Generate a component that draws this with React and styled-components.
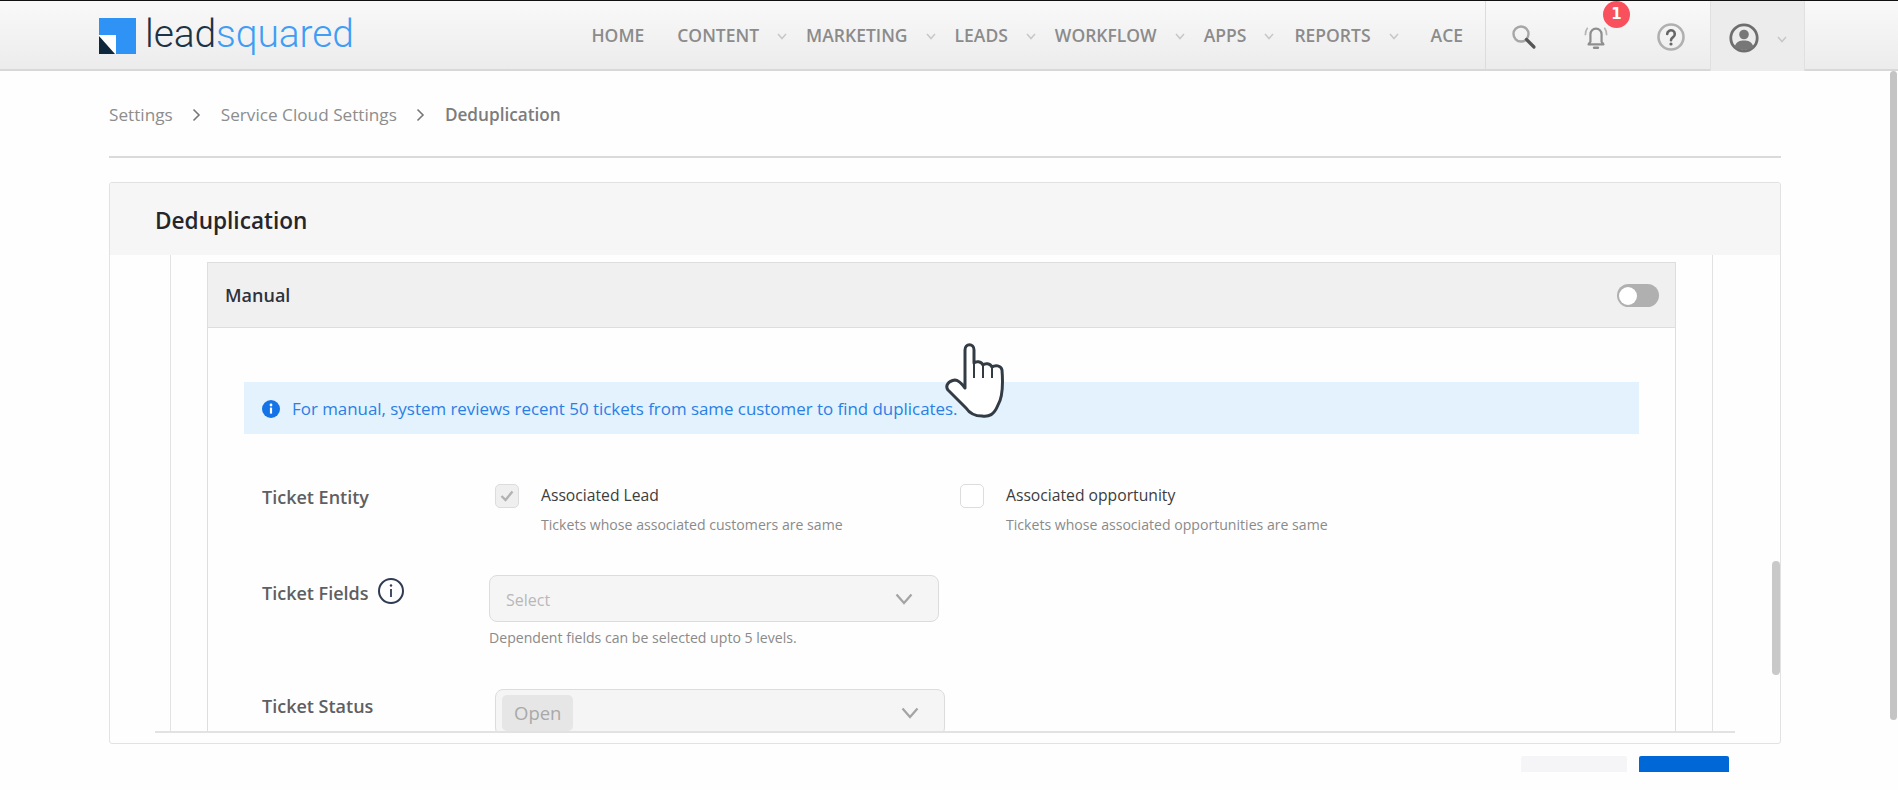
import React from "react";
import styled, { createGlobalStyle } from "styled-components";

const Global = createGlobalStyle`
  html, body { margin: 0; padding: 0; height: 790px; overflow: hidden; background: #fefefe; }
  body { font-family: "Open Sans", "Liberation Sans", sans-serif; }
  * { box-sizing: border-box; }
`;

const Page = styled.div`
  position: relative;
  width: 1898px;
  height: 790px;
  overflow: hidden;
`;

const Header = styled.header`
  display: flex;
  align-items: stretch;
  height: 71px;
  padding: 0 93px 0 99px;
  border-top: 1px solid #111;
  border-bottom: 2px solid #d8d8d8;
  background: linear-gradient(#f9f9fa, #ececec);
`;

const Logo = styled.div`
  display: flex;
  align-items: center;
  gap: 9px;
  padding-top: 2px;
`;

const LogoText = styled.span`
  font-family: "Roboto", sans-serif;
  font-size: 39px;
  font-weight: 300;
  letter-spacing: -0.1px;
  color: #1c3346;
  line-height: 1;
  margin-top: -3px;
`;

const LogoAccent = styled.span`
  color: #3f9df5;
`;

const Nav = styled.nav`
  display: flex;
  align-items: center;
  margin-left: auto;
`;

const NavItem = styled.a`
  display: flex;
  align-items: center;
  font-size: 17.5px;
  font-weight: 600;
  color: #8b8b8b;
  margin-right: ${(p) => p.$gap}px;
`;

const Caret = styled.svg`
  width: 10px;
  height: 7px;
  margin-left: ${(p) => p.$left}px;
  margin-top: 3px;
  fill: none;
  stroke: #c8c8c8;
  stroke-width: 1.6;
`;

const Tools = styled.div`
  display: flex;
  align-items: stretch;
  margin-left: 22px;
  border-left: 1px solid #dcdcdc;
`;

const ToolCell = styled.div`
  position: relative;
  display: flex;
  align-items: center;
  justify-content: center;
  width: ${(p) => p.$w}px;
  padding: 3px ${(p) => p.$right || 0}px 0 0;
`;

const UserCell = styled(ToolCell)`
  gap: 18px;
  background: #ececec;
  border-left: 1px solid #e0e0e0;
  border-right: 1px solid #e0e0e0;
  margin-bottom: -2px;
`;

const Badge = styled.span`
  position: absolute;
  top: 0;
  left: 41px;
  width: 27px;
  height: 27px;
  border-radius: 50%;
  background: #f8505c;
  color: #fff;
  font-family: "DejaVu Sans", sans-serif;
  font-weight: 700;
  font-size: 15px;
  line-height: 26px;
  text-align: center;
`;

const Main = styled.main`
  padding-left: 109px;
  width: 1781px;
`;

const Crumbs = styled.div`
  display: flex;
  align-items: center;
  height: 85px;
  padding-top: 2px;
  font-size: 17.2px;
  color: #8d8d8d;
`;

const CrumbSep = styled.svg`
  width: 9px;
  height: 14px;
  margin: 0 20px 0 19px;
  fill: none;
  stroke: #777;
  stroke-width: 1.6;
`;

const CrumbCurrent = styled.span`
  font-weight: 600;
  color: #7c7c7c;
`;

const Rule = styled.hr`
  margin: 0;
  border: 0;
  height: 2px;
  background: #dadada;
`;

const Card = styled.section`
  position: relative;
  margin-top: 24px;
  height: 562px;
  border: 1px solid #e2e2e2;
  border-radius: 3px;
  background: #fefefe;
  overflow: hidden;
`;

const CardHead = styled.div`
  display: flex;
  align-items: center;
  height: 72px;
  padding: 2px 0 0 45px;
  background: #f6f6f7;
  font-size: 22.6px;
  font-weight: 600;
  color: #25262b;
`;

const CardBody = styled.div`
  height: 476px;
  overflow: hidden;
  padding-left: 60px;
`;

const Column = styled.div`
  width: 1543px;
  height: 476px;
  padding: 7px 0 0 36px;
  border-left: 1px solid #e2e2e2;
  border-right: 1px solid #e2e2e2;
`;

const Box = styled.div`
  width: 1469px;
  border: 1px solid #dedede;
`;

const BoxHead = styled.div`
  display: flex;
  align-items: center;
  justify-content: space-between;
  height: 65px;
  padding: 0 16px 0 17px;
  background: #f0f0f1;
  border-bottom: 1px solid #dedede;
  font-size: 18px;
  font-weight: 600;
  color: #30323a;
`;

const Toggle = styled.span`
  position: relative;
  display: block;
  width: 42px;
  height: 23px;
  border-radius: 12px;
  background: #b0b0b0;
`;

const Knob = styled.span`
  position: absolute;
  left: 2px;
  top: 3px;
  width: 18px;
  height: 18px;
  border-radius: 50%;
  background: #fff;
`;

const BoxBody = styled.div`
  padding: 54px 0 60px 36px;
`;

const Banner = styled.div`
  display: flex;
  align-items: center;
  gap: 12px;
  width: 1395px;
  height: 52px;
  padding: 1px 0 0 18px;
  background: #e3f2fd;
  font-size: 16.9px;
  color: #2a7fe6;
`;

const Form = styled.div`
  padding: 50px 0 0 18px;
`;

const Row = styled.div`
  display: flex;
  align-items: flex-start;
  margin-bottom: ${(p) => p.$after}px;
`;

const Label = styled.div`
  display: flex;
  align-items: center;
  gap: 9px;
  flex: none;
  width: ${(p) => p.$w}px;
  margin-top: ${(p) => p.$top}px;
  line-height: 22px;
  font-size: 18px;
  font-weight: 600;
  color: #5f5f62;
`;

const Option = styled.div`
  display: flex;
  gap: 22px;
  width: 465px;
`;

const Check = styled.span`
  display: flex;
  align-items: center;
  justify-content: center;
  flex: none;
  width: 24px;
  height: 24px;
  border: 1px solid #dcdcdc;
  border-radius: 5px;
  background: ${(p) => (p.$on ? "#efefef" : "#fff")};
`;

const OptionTitle = styled.div`
  font-size: 15.7px;
  line-height: 22px;
  color: #3c3c3c;
`;

const Sub = styled.div`
  margin-top: ${(p) => p.$top}px;
  font-size: 14.1px;
  line-height: ${(p) => p.$lh}px;
  color: #8a8a8a;
`;

const Select = styled.div`
  display: flex;
  align-items: center;
  justify-content: space-between;
  width: 450px;
  height: 47px;
  padding: 0 25px 0 ${(p) => p.$pad}px;
  border: 1px solid #dcdcdc;
  border-radius: 8px;
  background: #f5f5f6;
  font-size: 16px;
  color: #b8b8b8;
`;

const SelectText = styled.span`
  padding-top: 2px;
`;

const Tag = styled.span`
  display: flex;
  align-items: center;
  height: 36px;
  padding: 0 12px;
  border-radius: 5px;
  background: #e6e6e6;
  font-size: 18.5px;
  color: #a9a9a9;
`;

const SelectCaret = styled.svg`
  width: 18px;
  height: 12px;
  fill: none;
  stroke: #a4a4a4;
  stroke-width: 2.2;
`;

const CardFoot = styled.div`
  height: 12px;
  margin: 0 45px;
  border-top: 2px solid #e2e2e2;
`;

const CardScroll = styled.span`
  position: absolute;
  right: 0;
  top: 378px;
  width: 8px;
  height: 114px;
  border-radius: 4px;
  background: #c9c9c9;
`;

const Actions = styled.div`
  display: flex;
  justify-content: flex-end;
  gap: 12px;
  margin-top: 12px;
  padding-right: 52px;
`;

const Button = styled.button`
  width: ${(p) => p.$w}px;
  height: 16px;
  padding: 0;
  border: 0;
  border-radius: 2px 2px 0 0;
  background: ${(p) => p.$bg};
`;

const PageScroll = styled.span`
  position: absolute;
  right: 1px;
  top: 71px;
  width: 7px;
  height: 649px;
  border-radius: 4px;
  background: #c4c4c4;
`;

const Hand = styled.svg`
  position: absolute;
  left: 945px;
  top: 343px;
  width: 60px;
  height: 76px;
`;

const caret = <path d="M1 1 L5 5.5 L9 1" />;
const bigCaret = <path d="M1.5 1.5 L9 10 L16.5 1.5" />;

const NAV = [
  ["HOME", false, 33],
  ["CONTENT", true, 19],
  ["MARKETING", true, 19],
  ["LEADS", true, 19],
  ["WORKFLOW", true, 19],
  ["APPS", true, 20],
  ["REPORTS", true, 32],
  ["ACE", false, 0],
];

export default function App() {
  return (
    <Page>
      <Global />
      <Header>
        <Logo>
          <svg width="37" height="36" viewBox="0 0 37 36">
            <rect width="37" height="36" fill="#2f93f5" />
            <path d="M0 17 H17 V36 H0 Z" fill="#fff" />
            <path d="M0 18 L16 36 H0 Z" fill="#10283c" />
          </svg>
          <LogoText>
            lead<LogoAccent>squared</LogoAccent>
          </LogoText>
        </Logo>
        <Nav>
          {NAV.map(([name, hasCaret, gap]) => (
            <NavItem key={name} $gap={gap}>
              {name}
              {hasCaret && <Caret $left={18} viewBox="0 0 10 7">{caret}</Caret>}
            </NavItem>
          ))}
        </Nav>
        <Tools>
          <ToolCell $w={76}>
            <svg width="26" height="26" viewBox="0 0 26 26" fill="none">
              <circle cx="10" cy="10" r="7.5" stroke="#a6a6a6" strokeWidth="2.4" />
              <path d="M15.5 15.5 L23 23" stroke="#555" strokeWidth="3.2" strokeLinecap="round" />
            </svg>
          </ToolCell>
          <ToolCell $w={72} $right={5}>
            <svg width="26" height="28" viewBox="0 0 28 30" fill="none" stroke="#8e8e8e">
              <path d="M8 20 V12 a6 6 0 0 1 12 0 V20 L22 23 H6 Z" strokeWidth="2.4" strokeLinejoin="round" />
              <path d="M12 26.5 h4" strokeWidth="2.8" strokeLinecap="round" />
              <path d="M5 5 Q2.5 8 2.5 13 M23 5 Q25.5 8 25.5 13" strokeWidth="1.8" stroke="#b4b4b4" />
            </svg>
            <Badge>1</Badge>
          </ToolCell>
          <ToolCell $w={76} $right={2}>
            <svg width="28" height="28" viewBox="0 0 28 28" fill="none">
              <circle cx="14" cy="14" r="12.5" stroke="#b0b0b0" strokeWidth="2.6" />
              <path d="M10.2 11 a3.8 3.8 0 1 1 5.9 3.2 c-1.5 1-2.1 1.6-2.1 3" stroke="#666" strokeWidth="2.6" strokeLinecap="round" />
              <circle cx="14" cy="21" r="1.6" fill="#666" />
            </svg>
          </ToolCell>
          <UserCell $w={95}>
            <svg width="30" height="30" viewBox="0 0 30 30" fill="none">
              <circle cx="15" cy="15" r="13.2" stroke="#6e6e6e" strokeWidth="2.8" />
              <circle cx="15" cy="11.5" r="4.8" fill="#777" />
              <path d="M5.5 24 C7 18.5 11 17.5 15 17.5 C19 17.5 23 18.5 24.5 24 C21 28 9 28 5.5 24 Z" fill="#777" />
            </svg>
            <Caret $left={0} viewBox="0 0 10 7">{caret}</Caret>
          </UserCell>
        </Tools>
      </Header>

      <Main>
        <Crumbs>
          <span>Settings</span>
          <CrumbSep viewBox="0 0 9 14"><path d="M1.5 1.5 L7 7 L1.5 12.5" /></CrumbSep>
          <span>Service Cloud Settings</span>
          <CrumbSep viewBox="0 0 9 14"><path d="M1.5 1.5 L7 7 L1.5 12.5" /></CrumbSep>
          <CrumbCurrent>Deduplication</CrumbCurrent>
        </Crumbs>
        <Rule />
        <Card>
          <CardHead>Deduplication</CardHead>
          <CardBody>
            <Column>
              <Box>
                <BoxHead>
                  Manual
                  <Toggle><Knob /></Toggle>
                </BoxHead>
                <BoxBody>
                  <Banner>
                    <svg width="18" height="18" viewBox="0 0 18 18">
                      <circle cx="9" cy="9" r="9" fill="#1473e6" />
                      <rect x="7.9" y="7.6" width="2.2" height="6" fill="#fff" />
                      <circle cx="9" cy="5" r="1.4" fill="#fff" />
                    </svg>
                    For manual, system reviews recent 50 tickets from same customer to find duplicates.
                  </Banner>
                  <Form>
                    <Row $after={41}>
                      <Label $w={233} $top={2}>Ticket Entity</Label>
                      <Option>
                        <Check $on>
                          <svg width="14" height="12" viewBox="0 0 14 12" fill="none">
                            <path d="M1.5 6 L5.5 10 L12.5 1.5" stroke="#b2b2b2" strokeWidth="2.4" />
                          </svg>
                        </Check>
                        <div>
                          <OptionTitle>Associated Lead</OptionTitle>
                          <Sub $top={10} $lh={18}>Tickets whose associated customers are same</Sub>
                        </div>
                      </Option>
                      <Option>
                        <Check />
                        <div>
                          <OptionTitle>Associated opportunity</OptionTitle>
                          <Sub $top={10} $lh={18}>Tickets whose associated opportunities are same</Sub>
                        </div>
                      </Option>
                    </Row>
                    <Row $after={41}>
                      <Label $w={227} $top={7}>
                        Ticket Fields
                        <svg width="26" height="26" viewBox="0 0 26 26" fill="none" style={{ marginTop: -4 }}>
                          <circle cx="13" cy="13" r="12" stroke="#2f3b52" strokeWidth="2" />
                          <path d="M13 11 V19" stroke="#2f3b52" strokeWidth="1.8" />
                          <circle cx="13" cy="7.5" r="1.2" fill="#2f3b52" />
                        </svg>
                      </Label>
                      <div>
                        <Select $pad={16}>
                          <SelectText>Select</SelectText>
                          <SelectCaret viewBox="0 0 18 12">{bigCaret}</SelectCaret>
                        </Select>
                        <Sub $top={6} $lh={20}>Dependent fields can be selected upto 5 levels.</Sub>
                      </div>
                    </Row>
                    <Row $after={0}>
                      <Label $w={233} $top={6}>Ticket Status</Label>
                      <Select $pad={6}>
                        <Tag>Open</Tag>
                        <SelectCaret viewBox="0 0 18 12">{bigCaret}</SelectCaret>
                      </Select>
                    </Row>
                  </Form>
                </BoxBody>
              </Box>
            </Column>
          </CardBody>
          <CardFoot />
          <CardScroll />
        </Card>
        <Actions>
          <Button $w={106} $bg="#f5f5f7" />
          <Button $w={90} $bg="#0068d6" />
        </Actions>
      </Main>

      <PageScroll />
      <Hand viewBox="0 0 60 76" fill="#fff" stroke="#333c45" strokeWidth="3" strokeLinejoin="round">
        <path d="M20 7 C20 0 29 0 29 7 V20 C31 18 36 18 38 22 C40 20 45 20 47 24 C50 22 56 22 57 27 C58 40 58 54 53 62 C49 72 44 74 37 73 C30 73 25 71 21 65 L3 47 C0 43 3 38 10 37 C13 37 17 41 20 45 Z" />
        <path d="M29 20 V35 M38 22 V35 M47 24 V35" strokeWidth="2" />
      </Hand>
    </Page>
  );
}
